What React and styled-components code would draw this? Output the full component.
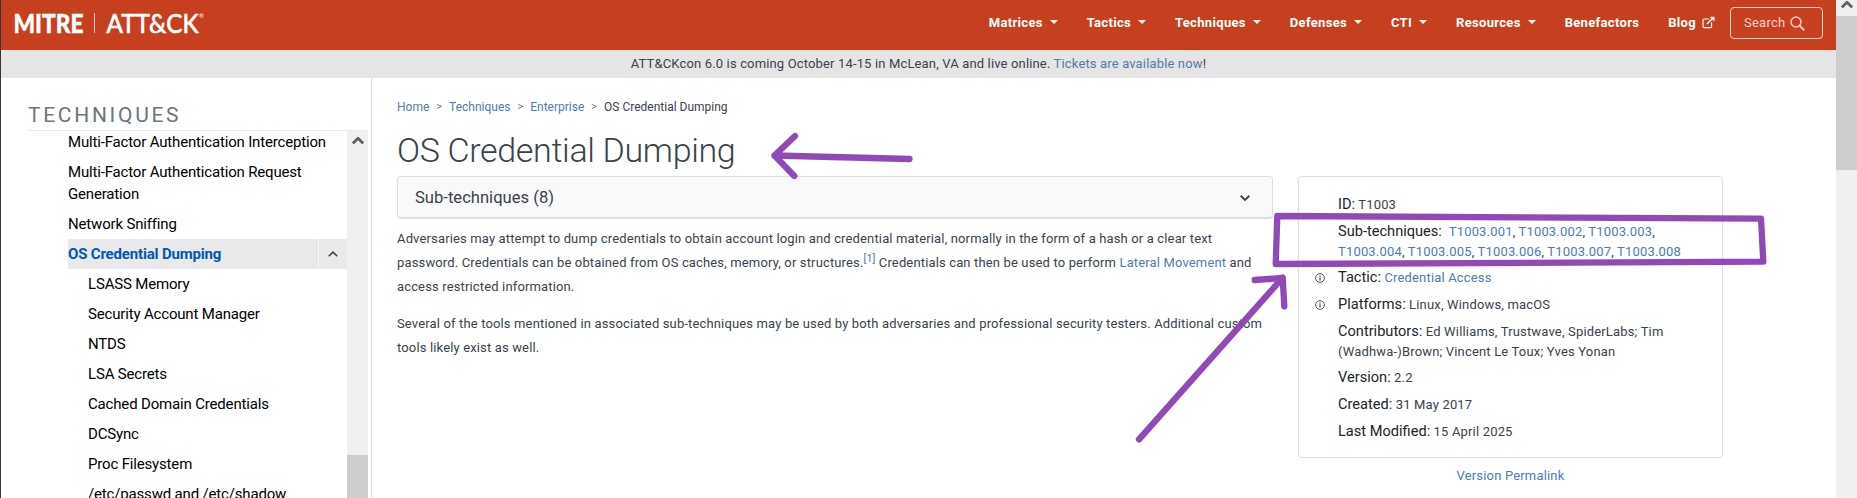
import React from 'react';
import styled, { createGlobalStyle } from 'styled-components';

const Global = createGlobalStyle`
  * { box-sizing: border-box; }
  body { margin: 0; background: #fff; overflow: hidden; font-family: Roboto, "Liberation Sans", sans-serif; }
  a { color: #4f7cac; text-decoration: none; }
`;

const Window = styled.div`
  position: relative;
  display: flex;
  width: 1857px;
  height: 498px;
  overflow: hidden;
  border-left: 1px solid #39343c;
`;
const Page = styled.div`
  flex: 1;
  display: flex;
  flex-direction: column;
  min-width: 0;
`;

const Header = styled.header`
  display: flex;
  justify-content: space-between;
  height: 50px;
  flex: none;
  padding: 0 13px 0 12px;
  background: #c63f1f;
`;
const Logo = styled.svg`
  display: block;
  width: 200px;
  height: 50px;
  fill: #fff;
  font-family: Lato, sans-serif;
`;
const Nav = styled.nav`
  display: flex;
  align-items: flex-start;
  padding-top: 7px;
`;
const NavItem = styled.span`
  display: flex;
  align-items: center;
  height: 32px;
  margin-right: ${(p) => p.$gap || 28.9}px;
  padding-bottom: 1px;
  font-size: 13px;
  font-weight: 700;
  letter-spacing: 0.33px;
  color: #fff;
  svg { margin: -1px 0 0 6px; }
`;
const Caret = styled.i`
  margin: -1px 0 0 7px;
  border: 4px solid transparent;
  border-top-color: #fff;
  border-bottom: 0;
`;
const SearchButton = styled.button`
  display: flex;
  align-items: center;
  gap: 5px;
  width: 93px;
  height: 32px;
  padding: 0 0 1px 13px;
  border: 1px solid #f3d5cd;
  border-radius: 4px;
  background: none;
  color: #f6d3ca;
  font: 400 13px Roboto, sans-serif;
  letter-spacing: 0.25px;
  svg { margin-top: 2px; }
`;

const Banner = styled.div`
  flex: none;
  height: 28px;
  background: #e5e5e5;
  color: #39434c;
  text-align: center;
  font-size: 13px;
  line-height: 28px;
  letter-spacing: 0.15px;
`;

const Body = styled.div`
  flex: 1;
  display: flex;
  min-height: 0;
`;
const Sidebar = styled.aside`
  width: 371px;
  flex: none;
  display: flex;
  flex-direction: column;
  padding: 20px 3px 0 27px;
  border-right: 1px solid #dcdcdc;
`;
const SidebarTitle = styled.div`
  height: 33px;
  flex: none;
  border-bottom: 1px solid #eaeaea;
  font-size: 21px;
  line-height: 34px;
  letter-spacing: 2.7px;
  color: #6c757d;
`;
const SidebarScroll = styled.div`
  flex: 1;
  display: flex;
  min-height: 0;
  overflow: hidden;
`;
const List = styled.div`
  flex: 1;
  margin-top: -4px;
  padding-left: 40px;
`;
const Item = styled.div`
  display: flex;
  justify-content: space-between;
  padding: 4px 0 4px ${(p) => (p.$child ? 20 : 0)}px;
  font-size: 15px;
  line-height: 22px;
  letter-spacing: -0.17px;
  white-space: pre-line;
  color: ${(p) => (p.$active ? '#0156b3' : '#000')};
  font-weight: ${(p) => (p.$active ? 700 : 400)};
  background: ${(p) => (p.$active ? '#e9e9e9' : 'none')};
`;
const Toggle = styled.span`
  display: flex;
  align-items: center;
  justify-content: center;
  width: 29px;
  margin: -4px 0;
  border-left: 1px solid #f6f6f6;
`;
const Track = styled.div`
  display: flex;
  flex-direction: column;
  align-items: center;
  width: 21px;
  flex: none;
  background: #f0f0f0;
  svg { display: block; flex: none; margin-top: ${(p) => p.$arrowTop}px; }
`;
const Thumb = styled.div`
  width: 21px;
  flex: none;
  height: ${(p) => p.$height}px;
  margin-top: ${(p) => p.$gap}px;
  background: #cdcdcd;
`;

const Main = styled.main`
  width: 876px;
  margin-left: 25px;
  color: #39434c;
`;
const Breadcrumb = styled.div`
  display: flex;
  gap: 7px;
  height: 16px;
  margin-top: 21px;
  font-size: 12px;
  line-height: 16px;
  i { font-style: normal; font-size: 11px; color: #6c757d; }
`;
const Title = styled.h1`
  margin: 14px 0 0;
  height: 47px;
  font-size: 34px;
  line-height: 42px;
  font-weight: 300;
  letter-spacing: -0.33px;
`;
const SubCard = styled.div`
  display: flex;
  align-items: center;
  justify-content: space-between;
  height: 43px;
  padding: 1px 22px 0 17px;
  border: 1px solid #dedede;
  border-bottom-width: 2px;
  border-radius: 4px;
  background: #f9f9f9;
  font-size: 16.6px;
`;
const Paragraph = styled.p`
  margin: ${(p) => p.$top}px 0 0;
  width: 872px;
  font-size: 13px;
  line-height: 24px;
  letter-spacing: 0.147px;
  sup { font-size: 10.5px; line-height: 0; vertical-align: 5px; }
`;

const Side = styled.section`
  width: 425px;
  margin: 98px 0 0 25px;
  color: #39434c;
  font-size: 13px;
  letter-spacing: 0.17px;
`;
const InfoCard = styled.div`
  height: 282px;
  padding: 18px 16px 0;
  border: 1px solid #dedede;
  border-radius: 4px;
`;
const InfoRow = styled.div`
  display: flex;
  margin-bottom: ${(p) => (p.$tall ? 6 : 7)}px;
  line-height: 20px;
`;
const InfoIcon = styled.span`
  display: flex;
  align-items: center;
  width: 23px;
  height: 20px;
`;
const InfoText = styled.div`
  flex: 1;
  white-space: pre-line;
`;
const Label = styled.span`
  font-size: 14.6px;
  line-height: 18px;
  letter-spacing: 0;
  color: #212529;
  margin-right: ${(p) => p.$gap || 0}px;
`;
const Permalink = styled.div`
  margin-top: 8px;
  text-align: center;
  line-height: 20px;
`;

const Overlay = styled.svg`
  position: absolute;
  left: -1px;
  top: 0;
  pointer-events: none;
  fill: none;
  stroke: #904ab8;
  stroke-width: 6.3;
  stroke-linecap: round;
  stroke-linejoin: round;
`;

const Chevron = ({ up, size = 10, color = '#39434c', width = 1.7 }) => (
  <svg width={size} height={size * 0.6} viewBox="0 0 10 6" fill="none" stroke={color} strokeWidth={width}>
    <path d={up ? 'M.7 5.3 5 1.1l4.3 4.2' : 'M.7.7 5 4.9 9.3.7'} />
  </svg>
);

const External = () => (
  <svg width="13" height="13" viewBox="0 0 13 13" fill="none" stroke="#fff" strokeWidth="1.1">
    <path d="M7.2 3H2.2Q1 3 1 4.2v6.2q0 1.2 1.2 1.2h6.2q1.2 0 1.2-1.2V6.2" />
    <path d="M5 8 11 2" strokeWidth="1.5" />
    <path d="M7.7.7h4.8v4.8z" fill="#fff" stroke="none" />
  </svg>
);

const Magnifier = () => (
  <svg width="15" height="15" viewBox="0 0 15 15" fill="none" stroke="#f6d3ca" strokeWidth="1.5">
    <circle cx="6" cy="6" r="5" />
    <path d="m9.6 9.6 4.7 4.7" strokeWidth="1.9" />
  </svg>
);

const Info = () => (
  <svg width="10" height="10" viewBox="0 0 10 10" fill="none" stroke="#39434c" strokeWidth="0.9">
    <circle cx="5" cy="5" r="4.4" />
    <path d="M5 4.2v3.3M5 2.3v1.1" strokeWidth="1.1" />
  </svg>
);

const parents = [
  'Multi-Factor Authentication Interception',
  'Multi-Factor Authentication Request\nGeneration',
  'Network Sniffing',
];
const children = [
  'LSASS Memory', 'Security Account Manager', 'NTDS', 'LSA Secrets',
  'Cached Domain Credentials', 'DCSync', 'Proc Filesystem', '/etc/passwd and /etc/shadow',
];
const subs = ['001', '002', '003', '004', '005', '006', '007', '008'];

const Row = ({ label, icon, tall, gap, children: value }) => (
  <InfoRow $tall={tall}>
    <InfoIcon>{icon && <Info />}</InfoIcon>
    <InfoText><Label $gap={gap}>{label}:</Label> {value}</InfoText>
  </InfoRow>
);

export default function App() {
  return (
    <Window>
      <Global />
      <Page>
        <Header>
          <Logo viewBox="0 0 200 50">
            <text x="0.5" y="32.5" fontSize="26.5" fontWeight="900" stroke="#fff" strokeWidth="0.4" textLength="70" lengthAdjust="spacingAndGlyphs">MITRE</text>
            <rect x="81" y="13" width="1" height="20" opacity="0.7" />
            <text x="93.5" y="32.5" fontSize="26.5" fontWeight="400" stroke="#fff" strokeWidth="0.7" textLength="92" lengthAdjust="spacingAndGlyphs">ATT&amp;CK</text>
            <text x="186" y="18" fontSize="6">®</text>
          </Logo>
          <Nav>
            {['Matrices', 'Tactics', 'Techniques', 'Defenses', 'CTI', 'Resources'].map((t) => (
              <NavItem key={t}>{t}<Caret /></NavItem>
            ))}
            <NavItem>Benefactors</NavItem>
            <NavItem $gap={15}>Blog<External /></NavItem>
            <SearchButton>Search<Magnifier /></SearchButton>
          </Nav>
        </Header>
        <Banner>
          ATT&amp;CKcon 6.0 is coming October 14-15 in McLean, VA and live online. <a>Tickets are available now</a>!
        </Banner>
        <Body>
          <Sidebar>
            <SidebarTitle>TECHNIQUES</SidebarTitle>
            <SidebarScroll>
              <List>
                {parents.map((t) => <Item key={t}>{t}</Item>)}
                <Item $active>OS Credential Dumping<Toggle><Chevron up width={1.5} /></Toggle></Item>
                {children.map((t) => <Item key={t} $child>{t}</Item>)}
              </List>
              <Track $arrowTop={6}>
                <Chevron up size={12} color="#606060" width={2.4} />
                <Thumb $height={60} $gap={311} />
              </Track>
            </SidebarScroll>
          </Sidebar>
          <Main>
            <Breadcrumb>
              <a>Home</a><i>&gt;</i><a>Techniques</a><i>&gt;</i><a>Enterprise</a><i>&gt;</i><span>OS Credential Dumping</span>
            </Breadcrumb>
            <Title>OS Credential Dumping</Title>
            <SubCard>Sub-techniques (8)<Chevron width={1.9} /></SubCard>
            <Paragraph $top={8}>
              Adversaries may attempt to dump credentials to obtain account login and credential material, normally in the form of a hash or a clear text password. Credentials can be obtained from OS caches, memory, or structures.<sup><a>[1]</a></sup> Credentials can then be used to perform <a>Lateral Movement</a> and access restricted information.
            </Paragraph>
            <Paragraph $top={13}>
              Several of the tools mentioned in associated sub-techniques may be used by both adversaries and professional security testers. Additional custom tools likely exist as well.
            </Paragraph>
          </Main>
          <Side>
            <InfoCard>
              <Row label="ID">T1003</Row>
              <Row label="Sub-techniques" tall gap={3.7}>
                {subs.map((s, i) => (
                  <React.Fragment key={s}>
                    <a>T1003.{s}</a>{i < 7 && ','}{i === 2 ? '\n' : ' '}
                  </React.Fragment>
                ))}
              </Row>
              <Row label="Tactic" icon><a>Credential Access</a></Row>
              <Row label="Platforms" icon>Linux, Windows, macOS</Row>
              <Row label="Contributors" tall>{'Ed Williams, Trustwave, SpiderLabs; Tim\n(Wadhwa-)Brown; Vincent Le Toux; Yves Yonan'}</Row>
              <Row label="Version">2.2</Row>
              <Row label="Created">31 May 2017</Row>
              <Row label="Last Modified">15 April 2025</Row>
            </InfoCard>
            <Permalink><a>Version Permalink</a></Permalink>
          </Side>
        </Body>
      </Page>
      <Track $arrowTop={1}>
        <Chevron up size={12} color="#606060" width={2.4} />
        <Thumb $height={154} $gap={8} />
      </Track>
      <Overlay width="1857" height="498" viewBox="0 0 1857 498">
        <path d="M795 136 774.5 155.5 794.3 176M774.5 155.5 909.5 159" />
        <path d="M1277.3 216 1761 218.7 1763.3 261.7 1275.7 264Z" />
        <path d="M1139 439.3 1282.7 277.7M1254.7 280 1282.7 278 1284.3 306.3" />
      </Overlay>
    </Window>
  );
}
